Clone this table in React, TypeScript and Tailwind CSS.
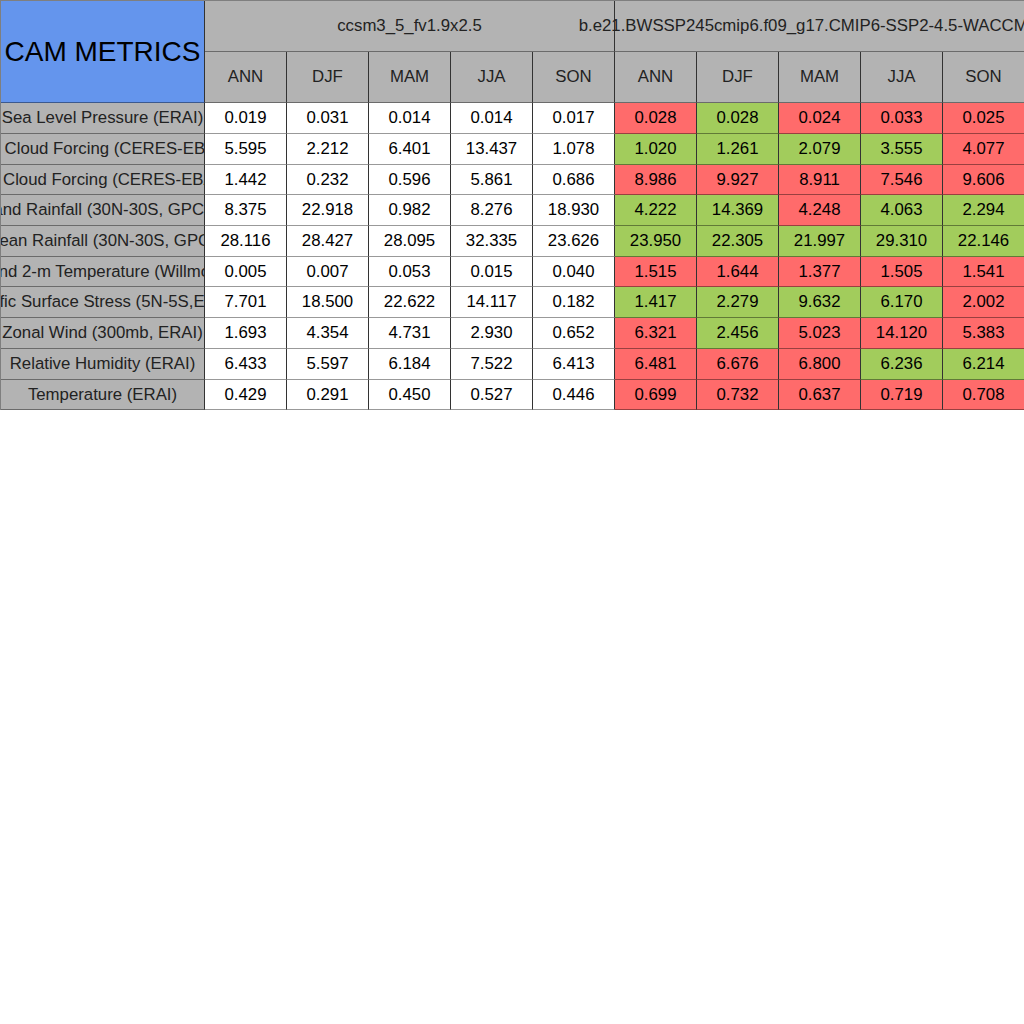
import React from 'react';

type Cell = { v: string; c?: 'r' | 'g' };

const SEASONS = ['ANN', 'DJF', 'MAM', 'JJA', 'SON'];

const ROWS: { label: string; h: string; base: string[]; run: Cell[] }[] = [
  { label: 'Sea Level Pressure (ERAI)', h: 'h-[31px]', base: ['0.019', '0.031', '0.014', '0.014', '0.017'],
    run: [{ v: '0.028', c: 'r' }, { v: '0.028', c: 'g' }, { v: '0.024', c: 'r' }, { v: '0.033', c: 'r' }, { v: '0.025', c: 'r' }] },
  { label: 'SW Cloud Forcing (CERES-EBAF)', h: 'h-[31px]', base: ['5.595', '2.212', '6.401', '13.437', '1.078'],
    run: [{ v: '1.020', c: 'g' }, { v: '1.261', c: 'g' }, { v: '2.079', c: 'g' }, { v: '3.555', c: 'g' }, { v: '4.077', c: 'r' }] },
  { label: 'LW Cloud Forcing (CERES-EBAF)', h: 'h-[30px]', base: ['1.442', '0.232', '0.596', '5.861', '0.686'],
    run: [{ v: '8.986', c: 'r' }, { v: '9.927', c: 'r' }, { v: '8.911', c: 'r' }, { v: '7.546', c: 'r' }, { v: '9.606', c: 'r' }] },
  { label: 'Land Rainfall (30N-30S, GPCP)', h: 'h-[31px]', base: ['8.375', '22.918', '0.982', '8.276', '18.930'],
    run: [{ v: '4.222', c: 'g' }, { v: '14.369', c: 'g' }, { v: '4.248', c: 'r' }, { v: '4.063', c: 'g' }, { v: '2.294', c: 'g' }] },
  { label: 'Ocean Rainfall (30N-30S, GPCP)', h: 'h-[31px]', base: ['28.116', '28.427', '28.095', '32.335', '23.626'],
    run: [{ v: '23.950', c: 'g' }, { v: '22.305', c: 'g' }, { v: '21.997', c: 'g' }, { v: '29.310', c: 'g' }, { v: '22.146', c: 'g' }] },
  { label: 'Land 2-m Temperature (Willmott)', h: 'h-[30px]', base: ['0.005', '0.007', '0.053', '0.015', '0.040'],
    run: [{ v: '1.515', c: 'r' }, { v: '1.644', c: 'r' }, { v: '1.377', c: 'r' }, { v: '1.505', c: 'r' }, { v: '1.541', c: 'r' }] },
  { label: 'Pacific Surface Stress (5N-5S,ERAI)', h: 'h-[31px]', base: ['7.701', '18.500', '22.622', '14.117', '0.182'],
    run: [{ v: '1.417', c: 'g' }, { v: '2.279', c: 'g' }, { v: '9.632', c: 'g' }, { v: '6.170', c: 'g' }, { v: '2.002', c: 'r' }] },
  { label: 'Zonal Wind (300mb, ERAI)', h: 'h-[31px]', base: ['1.693', '4.354', '4.731', '2.930', '0.652'],
    run: [{ v: '6.321', c: 'r' }, { v: '2.456', c: 'g' }, { v: '5.023', c: 'r' }, { v: '14.120', c: 'r' }, { v: '5.383', c: 'r' }] },
  { label: 'Relative Humidity (ERAI)', h: 'h-[31px]', base: ['6.433', '5.597', '6.184', '7.522', '6.413'],
    run: [{ v: '6.481', c: 'r' }, { v: '6.676', c: 'r' }, { v: '6.800', c: 'r' }, { v: '6.236', c: 'g' }, { v: '6.214', c: 'g' }] },
  { label: 'Temperature (ERAI)', h: 'h-[30px]', base: ['0.429', '0.291', '0.450', '0.527', '0.446'],
    run: [{ v: '0.699', c: 'r' }, { v: '0.732', c: 'r' }, { v: '0.637', c: 'r' }, { v: '0.719', c: 'r' }, { v: '0.708', c: 'r' }] },
];

const cellBase = 'flex items-center justify-center whitespace-nowrap text-[16.8px] border-r border-r-[#333] border-b border-b-black/40';

export default function App() {
  return (
    <div className="w-[1024px] h-[1024px] overflow-hidden bg-white text-black font-['Liberation_Sans',Arial,sans-serif]">
      <div className="grid grid-cols-[204px_repeat(10,82px)] border-t border-l border-black/50">
        <div className="row-span-2 h-[102px] flex items-center justify-center bg-[#6495ed] text-[28px] border-r border-r-[#333] border-b border-b-black/40 whitespace-nowrap overflow-hidden">
          CAM METRICS
        </div>
        <div className={`col-span-5 h-[51px] bg-[#b3b3b3] text-[#222] ${cellBase}`}>
          ccsm3_5_fv1.9x2.5
        </div>
        <div className={`col-span-5 h-[51px] bg-[#b3b3b3] text-[#222] ${cellBase}`}>
          b.e21.BWSSP245cmip6.f09_g17.CMIP6-SSP2-4.5-WACCM.001
        </div>
        {[...SEASONS, ...SEASONS].map((s, i) => (
          <div key={i} className={`h-[51px] bg-[#b3b3b3] text-[#222] ${cellBase}`}>
            {s}
          </div>
        ))}
        {ROWS.map((row, ri) => (
          <React.Fragment key={ri}>
            <div className={`${row.h} bg-[#b3b3b3] text-[#222] overflow-hidden ${cellBase}`}>
              {row.label}
            </div>
            {row.base.map((v, i) => (
              <div key={'b' + i} className={`${row.h} bg-white ${cellBase}`}>
                {v}
              </div>
            ))}
            {row.run.map((c, i) => (
              <div
                key={'r' + i}
                className={`${row.h} ${c.c === 'g' ? 'bg-[#a2cc5c]' : 'bg-[#ff6b6b]'} ${cellBase}`}
              >
                {c.v}
              </div>
            ))}
          </React.Fragment>
        ))}
      </div>
    </div>
  );
}
